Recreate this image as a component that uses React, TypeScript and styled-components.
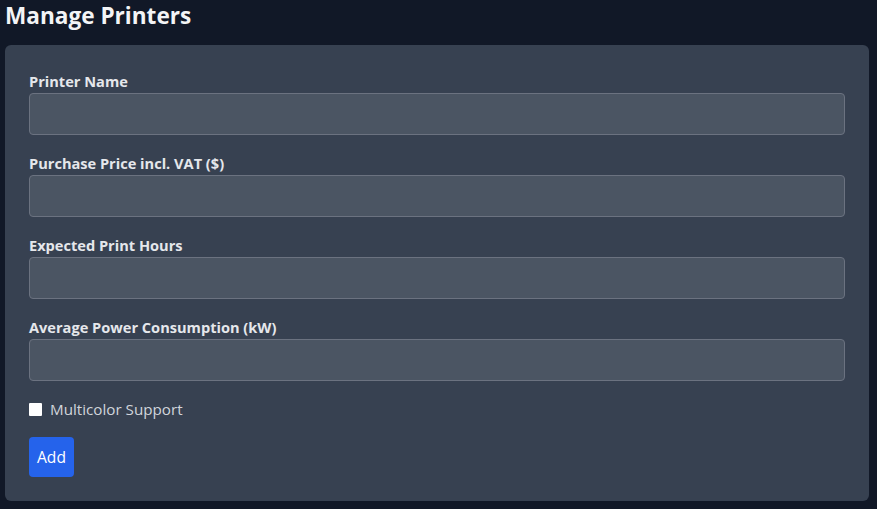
import React from "react";
import styled, { createGlobalStyle } from "styled-components";

const Global = createGlobalStyle`
  html, body { margin: 0; padding: 0; background: #111827; }
  body { font-family: "Open Sans", "Noto Sans", sans-serif; color: #e5e7eb; }
  * { box-sizing: border-box; }
`;

const Page = styled.div`
  padding: 0 8px 9px 5px;
  min-height: 509px;
`;

const Title = styled.h1`
  margin: 0 0 13px;
  font-size: 22.6px;
  line-height: 32px;
  font-weight: 700;
  color: #f3f4f6;
`;

const Card = styled.form`
  background: #374151;
  border-radius: 6px;
  padding: 24px;
  display: flex;
  flex-direction: column;
  gap: 16px;
`;

const Field = styled.div`
  display: flex;
  flex-direction: column;
  gap: 2px;
`;

const Label = styled.label`
  padding-top: 2px;
  font-size: 14.6px;
  line-height: 20px;
  font-weight: 700;
  color: #e5e7eb;
`;

const Input = styled.input`
  height: 42px;
  width: 100%;
  background: #4b5563;
  border: 1px solid #6b7280;
  border-radius: 4px;
  color: #f3f4f6;
  padding: 8px 12px;
  font: inherit;
  outline: none;
`;

const CheckRow = styled.label`
  display: flex;
  align-items: center;
  gap: 8px;
  height: 24px;
  font-size: 15.2px;
  color: #d1d5db;
`;

const Check = styled.input`
  width: 13px;
  height: 13px;
  margin: 0;
  appearance: none;
  background: #fff;
  border-radius: 1px;
`;

const Button = styled.button`
  align-self: flex-start;
  background: #2563eb;
  color: #fff;
  border: none;
  border-radius: 4px;
  height: 40px;
  padding: 0 8px;
  font: inherit;
  font-size: 15.6px;
`;

const fields = [
  "Printer Name",
  "Purchase Price incl. VAT ($)",
  "Expected Print Hours",
  "Average Power Consumption (kW)",
];

export default function App() {
  return (
    <Page>
      <Global />
      <Title>Manage Printers</Title>
      <Card onSubmit={(e) => e.preventDefault()}>
        {fields.map((f) => (
          <Field key={f}>
            <Label>{f}</Label>
            <Input type="text" />
          </Field>
        ))}
        <CheckRow>
          <Check type="checkbox" />
          Multicolor Support
        </CheckRow>
        <Button type="submit">Add</Button>
      </Card>
    </Page>
  );
}
